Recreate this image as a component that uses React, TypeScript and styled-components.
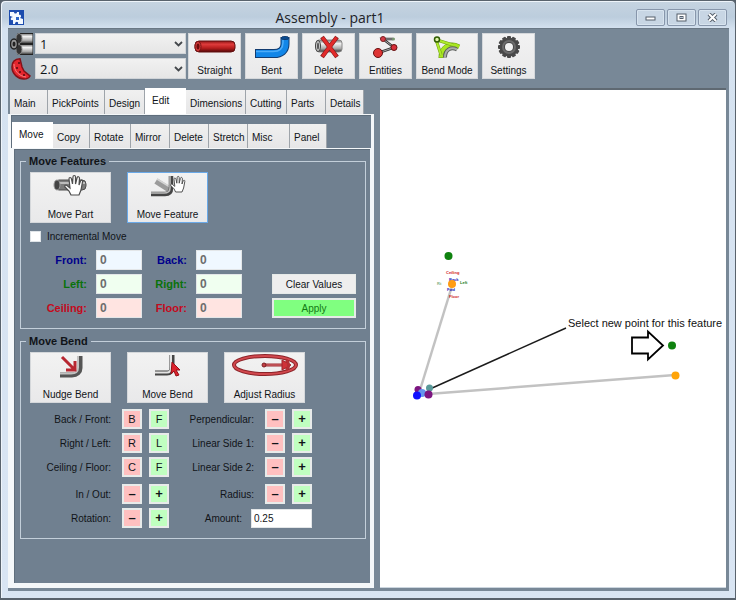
import React from "react";
import styled, { createGlobalStyle } from "styled-components";

const Global = createGlobalStyle`
  * { box-sizing: border-box; }
  body { margin: 0; background: #56606a; }
  body, button, input, select {
    font-family: "Liberation Sans", Arial, sans-serif;
    font-size: 10px;
    color: #101418;
  }
`;

const Window = styled.main`
  display: flex;
  flex-direction: column;
  min-height: 100vh;
  padding: 0 6px 7px 7px;
  border: 1px solid #59636d;
  border-bottom-width: 2px;
  border-radius: 5px 5px 0 0;
  background: linear-gradient(#c6d4e1, #bccddd 16px, #d5e2f0 28px, #d9e5f3);
  box-shadow: inset 1px 1px 0 #eef4fa;
`;

const TitleBar = styled.header`
  display: grid;
  grid-template-columns: 1fr auto 1fr;
  align-items: center;
  height: 27px;
  flex: none;
  padding: 6px 2px 0 1px;
`;

const Title = styled.h1`
  margin: 0;
  padding-right: 76px;
  font: 400 14px/18px "Open Sans", "Noto Sans", sans-serif;
  color: #1e2328;
`;

const CaptionButtons = styled.div`
  display: flex;
  justify-content: flex-end;
  gap: 2px;
`;

const CaptionButton = styled.button`
  display: flex;
  align-items: center;
  justify-content: center;
  width: 29px;
  height: 17px;
  padding: 0;
  border: 1px solid #8796ab;
  border-radius: 2px;
  background: #c8d6e4;
  box-shadow: inset 0 0 0 1px #d8e4ef;
`;

const Client = styled.div`
  flex: 1;
  display: flex;
  flex-direction: column;
  border-top: 1px solid #6a7885;
  background: #788897;
`;

const Toolbar = styled.div`
  display: flex;
  gap: 2px;
  padding: 4px 2px 0;
  height: 59px;
`;

const Tools = styled.div`
  display: flex;
  gap: 4px;
`;

const Pickers = styled.div`
  display: flex;
  flex-direction: column;
  gap: 4px;
`;

const Picker = styled.div`
  display: flex;
  align-items: center;
  gap: 2px;
  height: 21px;
  svg { flex: none; }
`;

const Select = styled.select`
  appearance: none;
  width: 151px;
  height: 21px;
  padding: 0 4px;
  border: 1px solid #d0d4d8;
  border-radius: 0;
  background: linear-gradient(#f1f1f1, #e6e6e6);
  font: 13px "Open Sans", "Noto Sans", sans-serif;
`;

const SelectWrap = styled.span`
  display: grid;
  align-items: center;
  > * { grid-area: 1 / 1; }
  svg { justify-self: end; margin-right: 3px; pointer-events: none; }
`;

const TileButton = styled.button<{ $w: number; $tall?: boolean; $focus?: boolean }>`
  display: flex;
  flex-direction: column;
  align-items: center;
  justify-content: space-between;
  width: ${(p) => p.$w}px;
  height: ${(p) => (p.$tall ? 51 : 46)}px;
  padding: 1px 0 0;
  border: 1px solid ${(p) => (p.$focus ? "#6aa9e8" : "#d5d8db")};
  background: linear-gradient(#f2f2f2, #e9e9ea);
  line-height: 14px;
  white-space: nowrap;
`;

const Body = styled.div`
  flex: 1;
  display: grid;
  grid-template-columns: 366px 1fr;
  gap: 6px;
  padding: 0 3px 3px 0;
`;

const Column = styled.div<{ $inset?: boolean }>`
  display: flex;
  flex-direction: column;
  flex: 1;
  min-width: 0;
  padding-top: ${(p) => (p.$inset ? 7 : 0)}px;
`;

const TabList = styled.div<{ $inset?: boolean }>`
  display: flex;
  align-items: flex-end;
  height: 26px;
  padding-left: ${(p) => (p.$inset ? 1 : 2)}px;
`;

const Tab = styled.button<{ $w: number; $on?: boolean }>`
  width: ${(p) => p.$w}px;
  height: ${(p) => (p.$on ? 26 : 24)}px;
  padding: ${(p) => (p.$on ? "0 0 2px 7px" : "2px 0 0 4px")};
  border: 0;
  border-right: 1px solid ${(p) => (p.$on ? "#ffffff" : "#9ea4aa")};
  background: ${(p) => (p.$on ? "#ffffff" : "linear-gradient(#f0f0f0, #e6e6e7)")};
  text-align: left;
  white-space: nowrap;
`;

const TabPage = styled.section<{ $inner?: boolean }>`
  flex: 1;
  display: flex;
  flex-direction: column;
  border: solid #f4f7f9;
  border-width: ${(p) => (p.$inner ? "1px 1px 3px 3px" : "1px 3px 2px 3px")};
  background: #708090;
  box-shadow: inset 1px 1px 0 #5f6e7c;
  padding: ${(p) => (p.$inner ? "5px 4px 5px 6px" : "0")};
`;

const Group = styled.fieldset`
  margin: 0 0 5px;
  padding: 4px 9px 10px;
  border: 1px solid #c3cfda;
  min-width: 0;
`;

const Legend = styled.legend`
  margin-left: -4px;
  padding: 0 3px;
  font: bold 11px/14px "Liberation Sans", Arial, sans-serif;
`;

const TileRow = styled.div`
  display: flex;
  gap: 16px;
`;

const Check = styled.label`
  display: flex;
  align-items: center;
  gap: 6px;
  width: max-content;
  height: 27px;
  input {
    appearance: none;
    width: 11px;
    height: 11px;
    margin: 0;
    border: 1px solid #dfe4e8;
    background: #ffffff;
  }
`;

const MoveArea = styled.div`
  display: grid;
  grid-template-columns: 57px 46px 36px 46px 1fr;
  grid-auto-rows: 20px;
  column-gap: 9px;
  row-gap: 4px;
  align-items: center;
`;

const DirLabel = styled.label<{ $c: string }>`
  font: bold 11px/19px "Liberation Sans", Arial, sans-serif;
  color: ${(p) => p.$c};
  text-align: right;
`;

const DirInput = styled.input<{ $bg: string }>`
  width: 100%;
  height: 20px;
  padding: 0 3px;
  border: 1px solid #e3e6e8;
  background: ${(p) => p.$bg};
  font: bold 12px "Liberation Sans", Arial, sans-serif;
  color: #6d6d6d;
`;

const WideButton = styled.button<{ $go?: boolean }>`
  justify-self: end;
  width: 84px;
  height: 20px;
  padding: 0;
  border: ${(p) => (p.$go ? 2 : 1)}px solid #e6eae8;
  background: ${(p) => (p.$go ? "#80ff80" : "#eeeeee")};
  color: ${(p) => (p.$go ? "#137a13" : "#101418")};
`;

const BendGrid = styled.div`
  display: flex;
  gap: 4px;
  padding-top: 6px;
`;

const BendColumn = styled.div`
  display: flex;
  flex-direction: column;
  gap: 4px;
`;

const BendRow = styled.div<{ $apart?: boolean }>`
  display: grid;
  grid-template-columns: 85px 20px 20px;
  column-gap: 7px;
  align-items: center;
  height: 20px;
  margin-top: ${(p) => (p.$apart ? 3 : 0)}px;
  > span { text-align: right; white-space: nowrap; padding-right: 4px; }
`;

const AmountRow = styled.div`
  display: flex;
  align-items: center;
  justify-content: flex-end;
  gap: 9px;
  height: 20px;
  input {
    width: 61px;
    height: 19px;
    padding: 0 2px;
    border: 1px solid #e3e6e8;
    background: #ffffff;
  }
`;

const StepButton = styled.button<{ $plus?: boolean; $sign?: boolean }>`
  height: 20px;
  padding: 0;
  border: 2px solid #e8ebea;
  background: ${(p) => (p.$plus ? "#c0ffc0" : "#ffc0c0")};
  font: ${(p) => (p.$sign ? "bold 13px" : "11px")}/14px "Liberation Sans", Arial, sans-serif;
`;

const Viewport = styled.section`
  border-top: 2px solid #5f6972;
  border-bottom: 1px solid #ccd6df;
  background: #ffffff;
  overflow: hidden;
  svg { display: block; }
`;

const Chevron = () => (
  <svg width="9" height="6" viewBox="0 0 9 6">
    <path d="M1 1 4.500 4.500 8 1" fill="none" stroke="#44484c" strokeWidth="1.800" />
  </svg>
);

const AppIcon = () => (
  <svg width="15" height="15" viewBox="0 0 15 15">
    <rect width="15" height="15" fill="#1c4cae" />
    <path d="M1 2h4c0 2 3 2 3 0h2v3c2-1 3 2 1 3l3 1v5H9c1-3-3-3-3 0H4v-4c-3 1-3-3 0-3L1 6z" fill="#f4f9ff" />
    <path d="M7 7h3v3H7z" fill="#2b66c8" />
  </svg>
);

const PipesIcon = () => (
  <svg width="23" height="22" viewBox="0 0 23 22">
    <defs>
      <linearGradient id="steel" x1="0" y1="0" x2="0" y2="1">
        <stop offset="0" stopColor="#777" /><stop offset=".3" stopColor="#f1f1f1" />
        <stop offset=".7" stopColor="#aaa" /><stop offset="1" stopColor="#333" />
      </linearGradient>
    </defs>
    <path d="M8 .5h15v10H8z" fill="url(#steel)" stroke="#222" />
    <path d="M8 11.500h15v10H8z" fill="url(#steel)" stroke="#222" />
    <ellipse cx="9" cy="5.500" rx="3" ry="5" fill="#333" stroke="#888" />
    <ellipse cx="9" cy="16.500" rx="3" ry="5" fill="#333" stroke="#888" />
    <ellipse cx="4" cy="11" rx="3.500" ry="5" fill="#999" stroke="#222" strokeWidth="1.500" />
    <ellipse cx="4" cy="11" rx="1.500" ry="2.500" fill="#222" />
  </svg>
);

const SliceIcon = () => (
  <svg width="23" height="22" viewBox="0 0 23 22">
    <path d="M10 .8C5 1 2 4 2 9c0 7 6 12 12 12 3 0 5-1 6-3l-6-5-2-4z" fill="#e5262e" stroke="#851118" strokeWidth="1.500" />
    <path d="M4 6c0 7 5 12 12 13" fill="none" stroke="#f48080" />
    <g fill="#540a0e"><circle cx="9" cy="5" r="1" /><circle cx="7" cy="10" r="1" /><circle cx="10" cy="14" r="1" /><circle cx="14" cy="17" r="1" /></g>
  </svg>
);

const StraightIcon = () => (
  <svg width="44" height="26" viewBox="0 0 44 26">
    <defs>
      <linearGradient id="redpipe" x1="0" y1="0" x2="0" y2="1">
        <stop offset="0" stopColor="#8f1515" /><stop offset=".3" stopColor="#df3b3b" />
        <stop offset=".65" stopColor="#b51d1d" /><stop offset="1" stopColor="#530909" />
      </linearGradient>
    </defs>
    <rect x="2" y="6" width="40" height="11" rx="4" fill="url(#redpipe)" stroke="#641010" />
    <ellipse cx="5" cy="11.500" rx="3" ry="5" fill="#d93d3d" stroke="#781414" />
    <ellipse cx="5" cy="11.500" rx="1.500" ry="3" fill="#6f0d0d" />
  </svg>
);

const BentIcon = () => (
  <svg width="38" height="26" viewBox="0 0 38 26">
    <path d="M2 18.500h19C28 18.500 32 15 32 9V2" fill="none" stroke="#123c70" strokeWidth="9" />
    <path d="M3 18.500h18C28 18.500 32 15 32 9V2.500" fill="none" stroke="#1186e8" strokeWidth="7" />
    <path d="M3 16.500h17c6 0 10-3 10-9V4" fill="none" stroke="#4dacf8" strokeWidth="1.500" />
    <ellipse cx="32" cy="3" rx="4" ry="1.500" fill="#0a4f96" stroke="#123c70" />
  </svg>
);

const DeleteIcon = () => (
  <svg width="32" height="26" viewBox="0 0 32 26">
    <rect x="3" y="5" width="26" height="12" rx="3" fill="url(#steel)" stroke="#888" />
    <ellipse cx="5" cy="11" rx="2.500" ry="5.500" fill="#ccc" stroke="#444" />
    <ellipse cx="5" cy="11" rx="1" ry="3.500" fill="#555" />
    <path d="M9 2 24 22M24 2 9 22" stroke="#851c1c" strokeWidth="4.500" />
    <path d="M9.500 2.500 23.500 21.500M23.500 2.500 9.500 21.500" stroke="#e22a2a" strokeWidth="3" />
  </svg>
);

const EntitiesIcon = () => (
  <svg width="30" height="26" viewBox="0 0 30 26">
    <path d="M7 18 23 12.500 12 4h10" fill="none" stroke="#333" strokeWidth="2.500" />
    <path d="M7 18 23 12.500 12 4h10" fill="none" stroke="#aaa" strokeWidth="1" />
    <circle cx="7" cy="18" r="4.500" fill="#de3434" stroke="#651010" />
    <circle cx="23" cy="12.500" r="3" fill="#d82f3a" stroke="#651010" />
    <circle cx="12" cy="4" r="2.500" fill="#d63c48" stroke="#7a2020" />
    <circle cx="22.500" cy="4" r="1.500" fill="#789870" />
  </svg>
);

const BendModeIcon = () => (
  <svg width="32" height="26" viewBox="0 0 32 26">
    <path d="M10 23C10 13 18 7 28 12" fill="none" stroke="#6a9a10" strokeWidth="5" />
    <path d="M10 22.500C10 13 18 7 28 12" fill="none" stroke="#a8e620" strokeWidth="4" />
    <path d="M14 22.500c0-8 6-11 12-8" fill="none" stroke="#5c5f5c" strokeWidth="4" />
    <path d="M14 22.500c0-8 6-11 12-8" fill="none" stroke="#a9aca8" strokeWidth="2" />
    <path d="M5.500 6 10 20M6 5l16 5" stroke="#6fa012" strokeWidth="3" />
    <path d="M5.500 6 10 20M6 5l16 5" stroke="#aeea2c" strokeWidth="2" />
    <circle cx="6" cy="4.500" r="2.500" fill="#dff5a8" stroke="#2f5c00" strokeWidth="1.500" />
  </svg>
);

const GearIcon = () => (
  <svg width="26" height="26" viewBox="0 0 26 26">
    <g fill="#494949">
      {[0, 30, 60, 90, 120, 150].map((a) => (
        <rect key={a} x="11" y="1" width="4" height="22" rx="1" transform={`rotate(${a} 13 12)`} />
      ))}
      <circle cx="13" cy="12" r="9.500" />
    </g>
    <circle cx="13" cy="12" r="6" fill="none" stroke="#6c6c6c" strokeWidth="2" />
    <circle cx="13" cy="12" r="4" fill="#f3f3f3" />
  </svg>
);

const Hand = ({ x, y, s = 1 }: { x: number; y: number; s?: number }) => (
  <path
    transform={`translate(${x} ${y}) scale(${s})`}
    d="M7 20 5 16 1 12c-1-1.500 1-2.500 2-1.500l3 2.500-1-9c0-2 2-2 2.500 0L8.500 9 9 2c0-2 2.500-2 2.500 0v7L13 3c.500-2 2.500-1.500 2.500.500L15 10l1.500-4c1-1.500 2.500-.5 2 1L17 15l-2 5z"
    fill="#ffffff" stroke="#4c4c4c" strokeWidth="1.200"
  />
);

const MovePartIcon = () => (
  <svg width="40" height="28" viewBox="0 0 40 28">
    <rect x="4" y="6" width="31" height="10" rx="4" fill="#7b7b7b" stroke="#4e4e4e" />
    <path d="M7 9h27" stroke="#bcbcbc" strokeWidth="2" />
    <ellipse cx="6" cy="11" rx="3" ry="5" fill="#444" stroke="#999" />
    <Hand x={13} y={1} />
  </svg>
);

const MoveFeatureIcon = () => (
  <svg width="40" height="28" viewBox="0 0 40 28">
    <path d="M8 7 22 16" stroke="#9b9b9b" strokeWidth="6" />
    <path d="M9 5 22 13" stroke="#d4d4d4" strokeWidth="1.500" />
    <path d="M3 20h14c4 0 6-2 6-6V2" fill="none" stroke="#454545" strokeWidth="4.500" />
    <path d="M3 19h13c4 0 6-2 6-5V2" fill="none" stroke="#bdbdbd" strokeWidth="1.500" />
    <Hand x={22} y={2} s={0.800} />
  </svg>
);

const NudgeIcon = () => (
  <svg width="40" height="28" viewBox="0 0 40 28">
    <path d="M9 21h12c5 0 8-3 8-7V2" fill="none" stroke="#555" strokeWidth="5" />
    <path d="M9 19.500h11c4 0 7-2 7-6V2" fill="none" stroke="#c2c2c2" strokeWidth="2" />
    <path d="m11 3 13 13m0-9v9h-9" fill="none" stroke="#b72731" strokeWidth="3" />
  </svg>
);

const MoveBendIcon = () => (
  <svg width="40" height="28" viewBox="0 0 40 28">
    <path d="M7 19h12c4 0 5-2 5-6V1" fill="none" stroke="#454545" strokeWidth="5" />
    <path d="M7 18.500h12c3 0 4-2 4-5V1" fill="none" stroke="#e3e3e3" strokeWidth="2" />
    <path d="m24 8 8 8-4 0 3 5-3 1-2-5-3 3z" fill="#dc222c" stroke="#941018" />
  </svg>
);

const RadiusIcon = () => (
  <svg width="68" height="26" viewBox="0 2 68 26">
    <ellipse cx="34" cy="13" rx="31" ry="9" fill="none" stroke="#8c2429" strokeWidth="4" />
    <ellipse cx="34" cy="13" rx="31" ry="9" fill="none" stroke="#d2484e" strokeWidth="2" />
    <path d="M33 13h24" stroke="#9f292f" strokeWidth="3" />
    <path d="M34 13h22" stroke="#dc7478" strokeWidth="1" />
    <path d="m51 8 9 5-9 5z" fill="#cf3138" stroke="#a1242b" />
    <circle cx="33" cy="13" r="2" fill="#c43d43" stroke="#7b2024" />
    <path d="M55 8c3 2 4 7 0 10" stroke="#b52e34" fill="none" strokeWidth="3" />
  </svg>
);

const Scene = () => (
  <svg width="346" height="497" viewBox="380 90 346 497" fontFamily="Liberation Sans, Arial, sans-serif">
    <path d="M420 390 452 286" stroke="#c2c2c2" strokeWidth="2.500" />
    <path d="M428 394 675 375" stroke="#c2c2c2" strokeWidth="2.500" />
    <path d="M430 389 566 328" stroke="#1b1b1b" strokeWidth="1.400" />
    <circle cx="448.500" cy="256" r="4" fill="#0f820f" />
    <g fontSize="4" fontWeight="bold">
      <text x="446" y="274" fill="#d02222">Ceiling</text>
      <text x="449" y="281" fill="#1818b8">Back</text>
      <text x="460" y="284" fill="#168016">Left</text>
      <text x="437" y="285" fill="#83b083">Rt</text>
      <text x="447" y="291" fill="#1818b8">Fwd</text>
      <text x="449" y="298" fill="#d02222">Floor</text>
    </g>
    <circle cx="452" cy="284" r="4" fill="#ff9c14" />
    <circle cx="418" cy="389.500" r="3.500" fill="#7c1580" />
    <circle cx="429.500" cy="388" r="3.500" fill="#5a9a9a" />
    <circle cx="422" cy="393" r="4" fill="#6495ed" />
    <circle cx="428.500" cy="394.500" r="4" fill="#7c1580" />
    <circle cx="417" cy="395.500" r="4" fill="#1010ff" />
    <text x="568" y="327" fontSize="11" fill="#111111">Select new point for this feature</text>
    <path d="M632 337.500h16v-6l15 14-15 14v-6h-16z" fill="none" stroke="#000000" strokeWidth="1.800" />
    <circle cx="672" cy="345.500" r="4" fill="#0f820f" />
    <circle cx="675.500" cy="375.500" r="4" fill="#ffa408" />
  </svg>
);

const tools = [
  { name: "Straight", w: 53, icon: <StraightIcon /> },
  { name: "Bent", w: 53, icon: <BentIcon /> },
  { name: "Delete", w: 53, icon: <DeleteIcon /> },
  { name: "Entities", w: 53, icon: <EntitiesIcon /> },
  { name: "Bend Mode", w: 62, icon: <BendModeIcon /> },
  { name: "Settings", w: 53, icon: <GearIcon /> },
];

const mainTabs: [string, number][] = [
  ["Main", 38], ["PickPoints", 57], ["Design", 40], ["Edit", 41],
  ["Dimensions", 60], ["Cutting", 41], ["Parts", 39], ["Details", 38],
];

const editTabs: [string, number][] = [
  ["Move", 41], ["Copy", 37], ["Rotate", 41], ["Mirror", 39],
  ["Delete", 39], ["Stretch", 39], ["Misc", 42], ["Panel", 37],
];

const Tabs = ({ items, active, inset }: { items: [string, number][]; active: string; inset?: boolean }) => (
  <TabList role="tablist" $inset={inset}>
    {items.map(([name, w]) => (
      <Tab key={name} role="tab" aria-selected={name === active} $w={w} $on={name === active}>{name}</Tab>
    ))}
  </TabList>
);

const Direction = ({ name, color, bg }: { name: string; color: string; bg: string }) => (
  <>
    <DirLabel htmlFor={name} $c={color}>{name}:</DirLabel>
    <DirInput id={name} $bg={bg} defaultValue="0" />
  </>
);

const Step = ({ name, a = "–", b = "+", apart }: { name: string; a?: string; b?: string; apart?: boolean }) => (
  <BendRow $apart={apart} role="group" aria-label={name}>
    <span>{name}:</span>
    <StepButton $sign={b === "+"}>{a}</StepButton>
    <StepButton $plus $sign={b === "+"}>{b}</StepButton>
  </BendRow>
);

const Combo = ({ value, label }: { value: string; label: string }) => (
  <SelectWrap>
    <Select aria-label={label} defaultValue={value}><option>{value}</option></Select>
    <Chevron />
  </SelectWrap>
);

export default function App() {
  return (
    <>
      <Global />
      <Window>
        <TitleBar>
          <AppIcon />
          <Title>Assembly - part1</Title>
          <CaptionButtons>
            <CaptionButton aria-label="Minimize">
              <svg width="11" height="9"><rect x="1" y="4" width="9" height="3" fill="#fff" stroke="#555f6b" /></svg>
            </CaptionButton>
            <CaptionButton aria-label="Maximize">
              <svg width="11" height="9"><rect x="1" y="1" width="9" height="7" fill="#fff" stroke="#555f6b" /><rect x="4" y="3.500" width="3" height="2" fill="#b8c5d3" stroke="#555f6b" /></svg>
            </CaptionButton>
            <CaptionButton aria-label="Close">
              <svg width="11" height="9"><path d="m2 1 7 7m0-7L2 8" stroke="#555f6b" strokeWidth="4" /><path d="m2 1 7 7m0-7L2 8" stroke="#fff" strokeWidth="2" /></svg>
            </CaptionButton>
          </CaptionButtons>
        </TitleBar>
        <Client>
          <Toolbar>
            <Pickers>
              <Picker><PipesIcon /><Combo value="1" label="Tube" /></Picker>
              <Picker><SliceIcon /><Combo value="2.0" label="Radius size" /></Picker>
            </Pickers>
            <Tools>
              {tools.map((t) => (
                <TileButton key={t.name} $w={t.w}>{t.icon}{t.name}</TileButton>
              ))}
            </Tools>
          </Toolbar>
          <Body>
            <Column>
              <Tabs items={mainTabs} active="Edit" />
              <TabPage>
                <Column $inset>
                  <Tabs items={editTabs} active="Move" inset />
                  <TabPage $inner>
                    <Group>
                      <Legend>Move Features</Legend>
                      <TileRow>
                        <TileButton $w={81} $tall><MovePartIcon />Move Part</TileButton>
                        <TileButton $w={81} $tall $focus><MoveFeatureIcon />Move Feature</TileButton>
                      </TileRow>
                      <Check><input type="checkbox" />Incremental Move</Check>
                      <MoveArea>
                        <Direction name="Front" color="#00008b" bg="#f0f8ff" />
                        <Direction name="Back" color="#00008b" bg="#f0f8ff" />
                        <span />
                        <Direction name="Left" color="#0a720a" bg="#f0fff0" />
                        <Direction name="Right" color="#0a720a" bg="#f0fff0" />
                        <WideButton>Clear Values</WideButton>
                        <Direction name="Ceiling" color="#c40a1c" bg="#ffe4e1" />
                        <Direction name="Floor" color="#c40a1c" bg="#ffe4e1" />
                        <WideButton $go>Apply</WideButton>
                      </MoveArea>
                    </Group>
                    <Group>
                      <Legend>Move Bend</Legend>
                      <TileRow>
                        <TileButton $w={81} $tall><NudgeIcon />Nudge Bend</TileButton>
                        <TileButton $w={81} $tall><MoveBendIcon />Move Bend</TileButton>
                        <TileButton $w={81} $tall><RadiusIcon />Adjust Radius</TileButton>
                      </TileRow>
                      <BendGrid>
                        <BendColumn>
                          <Step name="Back / Front" a="B" b="F" />
                          <Step name="Right / Left" a="R" b="L" />
                          <Step name="Ceiling / Floor" a="C" b="F" />
                          <Step name="In / Out" apart />
                          <Step name="Rotation" />
                        </BendColumn>
                        <BendColumn>
                          <Step name="Perpendicular" />
                          <Step name="Linear Side 1" />
                          <Step name="Linear Side 2" />
                          <Step name="Radius" apart />
                          <AmountRow>
                            <label htmlFor="amount">Amount:</label>
                            <input id="amount" defaultValue="0.25" />
                          </AmountRow>
                        </BendColumn>
                      </BendGrid>
                    </Group>
                  </TabPage>
                </Column>
              </TabPage>
            </Column>
            <Viewport aria-label="Assembly view"><Scene /></Viewport>
          </Body>
        </Client>
      </Window>
    </>
  );
}
